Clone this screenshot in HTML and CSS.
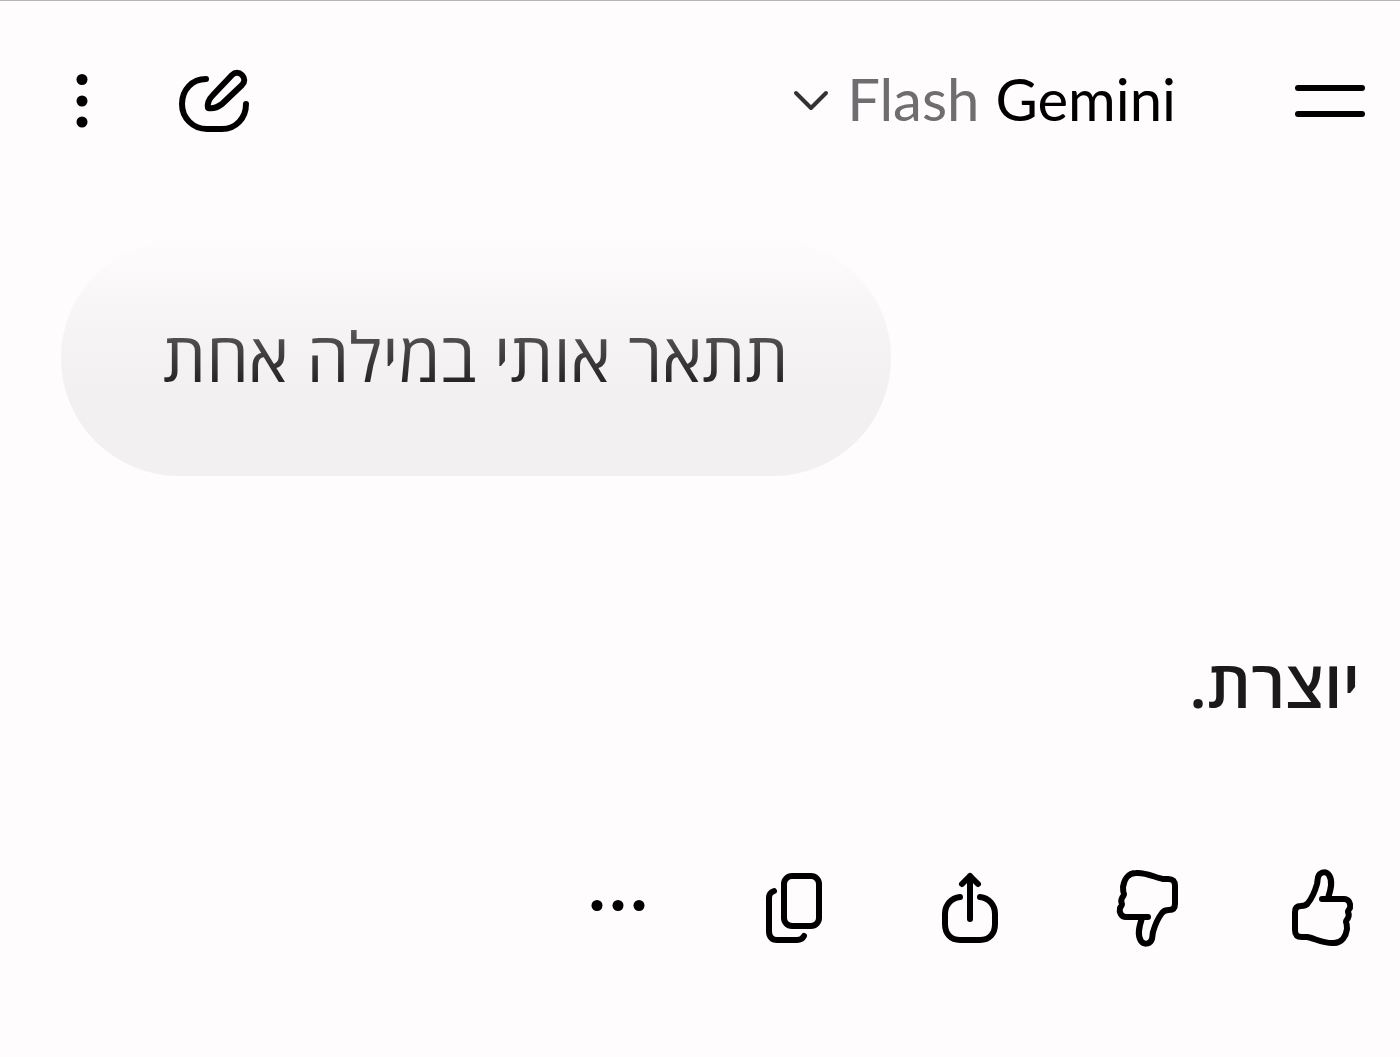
FILE: index.html
```html
<!DOCTYPE html>
<html lang="he" dir="rtl">
<head>
    <meta charset="UTF-8">
    <meta name="viewport" content="width=device-width, initial-scale=1.0">
    <title>Gemini</title>
    <link rel="stylesheet" href="styles.css">
</head>
<body>
    <header class="topbar">
        <button class="icon-btn" type="button" aria-label="תפריט">
            <svg viewBox="0 0 80 80"><path d="M8 27H72M8 53H72"/></svg>
        </button>
        <button class="model-btn" type="button">
            <span class="model-name">Gemini</span>
            <span class="model-type">Flash</span>
            <svg class="chevron" viewBox="0 0 40 40"><path d="M5 12L20 27L35 12"/></svg>
        </button>
        <div class="topbar-actions">
            <button class="icon-btn" type="button" aria-label="צ'אט חדש">
                <svg viewBox="0 0 80 80">
                    <path d="M32 18C18 18 8 29 8 43C8 57 19 68 33 68H48C62 68 72 57 72 43"/>
                    <path d="M34 47C33 42 35 38 39 34L58 14C61 11 65 11 68 14C71 17 71 21 68 24L48 43C44 46 39 48 34 47Z"/>
                </svg>
            </button>
            <button class="icon-btn" type="button" aria-label="עוד">
                <svg class="dots" viewBox="0 0 80 80"><circle cx="40" cy="18.5" r="5.5"/><circle cx="40" cy="40" r="5.5"/><circle cx="40" cy="61" r="5.5"/></svg>
            </button>
        </div>
    </header>

    <main class="chat">
        <div class="message-user">תתאר אותי במילה אחת</div>

        <p class="message-model">יוצרת.</p>

        <div class="message-actions">
            <button class="icon-btn" type="button" aria-label="תשובה טובה">
                <svg viewBox="0 0 80 80">
                    <path d="M40 32H62C67 32 69 37 68 41C67 43 66 43 66 45C67 47 67 49 66 51C65 53 64 53 64 55C65 57 65 60 65 62C64 69 60 76 52 76C42 77 32 71 25 70H20C15 70 13 68 13 63V45C13 41 15 39 19 39C22 39 24 39 26 36C30 31 33 24 35 17C36 13 35 11 37 8C39 5 44 4 47 8C51 14 49 22 46 31"/>
                </svg>
            </button>
            <button class="icon-btn" type="button" aria-label="תשובה לא טובה">
                <svg viewBox="0 0 80 80">
                    <path transform="rotate(180 41 41)" d="M40 32H62C67 32 69 37 68 41C67 43 66 43 66 45C67 47 67 49 66 51C65 53 64 53 64 55C65 57 65 60 65 62C64 69 60 76 52 76C42 77 32 71 25 70H20C15 70 13 68 13 63V45C13 41 15 39 19 39C22 39 24 39 26 36C30 31 33 24 35 17C36 13 35 11 37 8C39 5 44 4 47 8C51 14 49 22 46 31"/>
                </svg>
            </button>
            <button class="icon-btn" type="button" aria-label="שיתוף">
                <svg viewBox="0 0 80 80">
                    <path d="M40 52V9M32 17L40 9L48 17"/>
                    <path d="M30 30C21 31 15 38 15 47V57C15 67 21 73 30 73H50C59 73 65 67 65 57V47C65 38 59 31 50 30"/>
                </svg>
            </button>
            <button class="icon-btn" type="button" aria-label="העתקה">
                <svg viewBox="0 0 80 80">
                    <rect x="30" y="9" width="35" height="50" rx="8"/>
                    <path d="M20 24C17 25 15 27 15 31V64C15 70 18 73 23 73H43C47 73 49 71 50 69"/>
                </svg>
            </button>
            <button class="icon-btn" type="button" aria-label="אפשרויות נוספות">
                <svg class="dots" viewBox="0 0 80 80"><circle cx="19" cy="38.5" r="5.5"/><circle cx="40" cy="38.5" r="5.5"/><circle cx="61" cy="38.5" r="5.5"/></svg>
            </button>
        </div>
    </main>
</body>
</html>
```
FILE: styles.css
```css
* {
    box-sizing: border-box;
}
body {
    margin: 0;
    border-top: 1px solid #b8b5b7;
    background-color: #fefcfd;
    color: #1b1a1b;
    font-family: "Open Sans", "Noto Sans", sans-serif;
}
button {
    padding: 0;
    border: 0;
    background: none;
    color: #000;
    font: inherit;
    cursor: pointer;
}
svg {
    display: block;
    fill: none;
    stroke: currentColor;
    stroke-width: 6;
    stroke-linecap: round;
    stroke-linejoin: round;
}
.icon-btn svg {
    width: 80px;
    height: 80px;
}
.icon-btn .dots {
    fill: currentColor;
    stroke: none;
}

/* Top bar */
.topbar {
    display: flex;
    align-items: center;
    height: 200px;
    padding: 0 30px 0 42px;
}
.model-btn {
    display: flex;
    align-items: center;
    gap: 16px;
    margin-right: 114px;
    font-family: "Lato", sans-serif;
    font-size: 58px;
    line-height: 76px;
}
.model-name,
.model-type {
    padding-bottom: 4px;
}
.model-type {
    color: #6f6d6f;
}
.chevron {
    width: 40px;
    height: 40px;
    color: #333;
    stroke-width: 4;
}
.topbar-actions {
    display: flex;
    gap: 52px;
    margin-right: auto;
}

/* Conversation */
.chat {
    display: flex;
    flex-direction: column;
    padding: 39px 40px 60px 61px;
}
.message-user {
    position: relative;
    align-self: flex-end;
    padding: 66px 102px 70px;
    border-radius: 118px;
    background-color: #f2f0f1;
    font-size: 68px;
    line-height: 100px;
}
.message-user::after {
    content: "";
    position: absolute;
    inset: -1px;
    background: linear-gradient(#fefcfd, rgba(254, 252, 253, 0.25) 40%, rgba(254, 252, 253, 0) 65%);
}
.message-model {
    margin: 156px 0 0;
    font-size: 66px;
    font-weight: 600;
    line-height: 100px;
}
.message-actions {
    display: flex;
    gap: 96px;
    margin: 135px -2px 0 0;
}
```
